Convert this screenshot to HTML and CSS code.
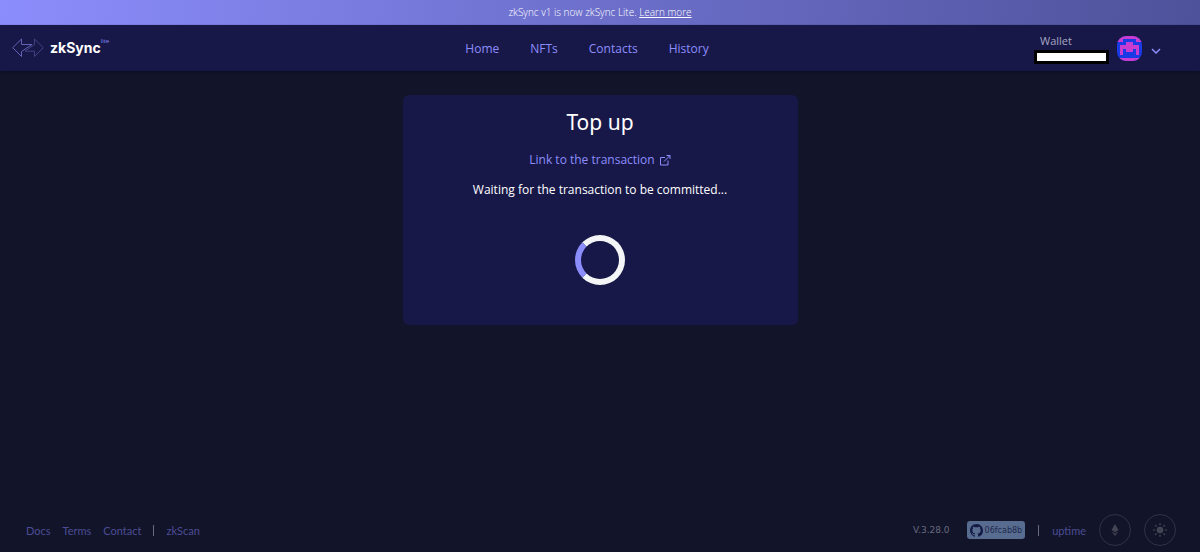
FILE: index.html
```html
<!DOCTYPE html>
<html lang="en">

<head>
  <meta charset="utf-8">
  <title>zkSync Lite Wallet</title>
  <link rel="stylesheet" href="styles.css">
</head>

<body>
  <div class="banner">zkSync v1 is now zkSync Lite. <a href="#">Learn more</a></div>

  <header class="header">
    <a href="#" class="logo" aria-label="zkSync Lite">
      <svg class="logoIcon" viewBox="0 0 32 20" fill="none">
        <path d="M9.500 1 L0.700 9.700 L9.500 18.500 V13.500 L20 6.500 H9.500 Z" stroke="#6262b8" />
        <path d="M22.500 1 L31.300 9.700 L22.500 18.500 V13.200 H13 L22.500 6.500 Z" stroke="#414184" />
      </svg>
      <span class="logoName">zkSync</span>
      <span class="logoLite">lite</span>
    </a>
    <nav class="nav">
      <a href="#">Home</a>
      <a href="#">NFTs</a>
      <a href="#">Contacts</a>
      <a href="#">History</a>
    </nav>
    <div class="account">
      <div class="wallet">
        <span class="walletLabel">Wallet</span>
        <span class="walletAddress"></span>
      </div>
      <svg class="avatar" viewBox="0 0 8 8" shape-rendering="crispEdges">
        <rect width="8" height="8" fill="#1a3ae6" />
        <path fill="#c83cd0" d="M0 0h8v2H6V1H2v1H0zM3 2h2v1h2v3H6V4H5v1H3V4H2v2H1V3h2zM1 7h6v1H1z" />
      </svg>
      <button class="menuButton" aria-label="Account menu">
        <svg viewBox="0 0 10 6" fill="none"><path d="M1 1l4 4 4-4" stroke="#8c8dfc" stroke-width="1.500" /></svg>
      </button>
    </div>
  </header>

  <main class="main">
    <section class="card">
      <h1>Top up</h1>
      <a href="#" class="txLink">Link to the transaction
        <svg viewBox="0 0 12 12" fill="none" stroke="#8c8dfc">
          <path d="M6 3.500H1.500v7.500h7.500V6.500M7.500 1.500h3.500v3.500M11 1.500L5 7.500" />
        </svg>
      </a>
      <p>Waiting for the transaction to be committed...</p>
      <div class="loader"></div>
    </section>
  </main>

  <footer class="footer">
    <div class="footerLinks">
      <a href="#">Docs</a>
      <a href="#">Terms</a>
      <a href="#">Contact</a>
      <span class="divider"></span>
      <a href="#">zkScan</a>
    </div>
    <div class="footerInfo">
      <span class="version">V.3.28.0</span>
      <a href="#" class="commit">
        <svg viewBox="0 0 16 16"><path fill="#141a46" d="M8 0C3.580 0 0 3.580 0 8c0 3.540 2.290 6.530 5.470 7.590.4.070.55-.17.55-.38 0-.19-.01-.82-.01-1.490-2.010.37-2.530-.49-2.690-.94-.09-.23-.48-.94-.82-1.130-.28-.15-.68-.52-.01-.53.63-.01 1.080.58 1.230.82.72 1.210 1.870.87 2.330.66.07-.52.28-.87.51-1.070-1.780-.2-3.640-.89-3.640-3.950 0-.87.31-1.590.82-2.150-.08-.2-.36-1.020.08-2.120 0 0 .67-.21 2.200.82.64-.18 1.320-.27 2-.27s1.360.09 2 .27c1.530-1.040 2.200-.82 2.200-.82.44 1.100.16 1.920.08 2.120.51.56.82 1.270.82 2.150 0 3.070-1.870 3.750-3.650 3.950.29.25.54.73.54 1.480 0 1.070-.01 1.930-.01 2.200 0 .21.15.46.55.38A8.010 8.010 0 0 0 16 8c0-4.420-3.580-8-8-8z" /></svg>
        06fcab8b
      </a>
      <span class="divider"></span>
      <a href="#">uptime</a>
      <button class="roundButton" aria-label="Network">
        <svg viewBox="0 0 14 14" fill="#424454"><path d="M7 1l3.500 6L7 9.200 3.500 7zM3.500 8.200L7 10.400l3.500-2.200L7 13z" /></svg>
      </button>
      <button class="roundButton" aria-label="Toggle theme">
        <svg viewBox="0 0 14 14" fill="#424454" stroke="#424454">
          <circle cx="7" cy="7" r="3" />
          <path stroke-width="1.500" stroke-linecap="round" d="M7 .8v.6M7 12.600v.6M.8 7h.6M12.600 7h.6M2.600 2.600l.4.4M11 11l.4.4M2.600 11.400l.4-.4M11 3l.4-.4" />
        </svg>
      </button>
    </div>
  </footer>
</body>

</html>
```
FILE: styles.css
```css
* {
  box-sizing: border-box;
}

body {
  margin: 0;
  min-height: 100vh;
  display: flex;
  flex-direction: column;
  background-color: #12142a;
  color: #fff;
  font-family: "Open Sans", "Noto Sans", sans-serif;
  font-size: 12px;
}

a {
  color: #8c8dfc;
  text-decoration: none;
}

button {
  padding: 0;
  border: none;
  background: none;
  cursor: pointer;
}

.banner {
  height: 25px;
  line-height: 25px;
  text-align: center;
  font-size: 10px;
  font-weight: 300;
  background: linear-gradient(90deg, #8c8dfc, #4e529a);
}

.banner a {
  color: #fff;
  text-decoration: underline;
}

.header {
  display: grid;
  grid-template-columns: 1fr auto 1fr;
  align-items: center;
  height: 46px;
  padding: 0 38px 0 12px;
  background-color: #181848;
  box-shadow: 0 1px 2px #0c0d20;
}

.logo {
  display: flex;
  align-items: center;
  color: #fff;
}

.logoIcon {
  width: 32px;
  height: 20px;
  margin-right: 6px;
}

.logoName {
  font-family: Inter, sans-serif;
  font-size: 14px;
  font-weight: 700;
  line-height: 20px;
}

.logoLite {
  align-self: flex-start;
  color: #8c8dfc;
  font-size: 6px;
  line-height: 6px;
}

.nav {
  display: flex;
  gap: 31px;
}

.account {
  display: flex;
  align-items: center;
  justify-content: flex-end;
}

.wallet {
  display: flex;
  flex-direction: column;
  margin-right: 8px;
}

.walletLabel {
  padding-left: 6px;
  color: #a5a6c2;
  font-size: 11px;
  line-height: 18px;
}

.walletAddress {
  width: 75px;
  height: 14px;
  background-color: #fff;
  border: 3px solid #000;
}

.avatar {
  width: 25px;
  height: 25px;
  border-radius: 9px;
}

.menuButton {
  display: flex;
  margin-left: 8px;
  padding-top: 6px;
}

.menuButton svg {
  width: 12px;
  height: 6px;
}

.main {
  flex: 1;
  padding: 24px;
}

.card {
  display: flex;
  flex-direction: column;
  align-items: center;
  max-width: 395px;
  margin: 0 auto;
  padding: 13px 20px 40px;
  background-color: #181848;
  border-radius: 6px;
}

.card h1 {
  margin: 0 0 14px;
  font-family: "Noto Sans", sans-serif;
  font-size: 21px;
  font-weight: 400;
  line-height: 28px;
}

.txLink {
  display: flex;
  align-items: center;
  gap: 4px;
  line-height: 20px;
}

.txLink svg {
  width: 12px;
  height: 12px;
}

.card p {
  margin: 10px 0 35px;
  line-height: 20px;
}

.loader {
  width: 50px;
  height: 50px;
  border: 6px solid #f4f5f7;
  border-left-color: #8c8dfc;
  border-radius: 50%;
}

.footer {
  display: flex;
  align-items: center;
  justify-content: space-between;
  height: 44px;
  padding: 0 24px 0 26px;
  font-family: Lato, sans-serif;
  font-size: 11px;
}

.footerLinks,
.footerInfo {
  display: flex;
  align-items: center;
  gap: 12px;
}

.footerInfo {
  gap: 13px;
}

.footer a {
  color: #4c4d94;
}

.divider {
  width: 1px;
  height: 11px;
  background-color: #686b7c;
}

.version {
  margin-right: 4px;
  color: #686b7c;
  font-family: "DejaVu Sans", sans-serif;
  font-size: 9px;
}

.footer .commit {
  display: flex;
  align-items: center;
  gap: 2px;
  height: 18px;
  padding: 0 3px;
  color: #20294e;
  font-family: "DejaVu Sans", sans-serif;
  font-size: 8px;
  background-color: #586c90;
  border-radius: 3px;
}

.commit svg {
  width: 13px;
  height: 13px;
}

.roundButton {
  display: flex;
  align-items: center;
  justify-content: center;
  width: 32px;
  height: 32px;
  border: 1px solid #303244;
  border-radius: 50%;
}

.roundButton svg {
  width: 14px;
  height: 14px;
}
```
